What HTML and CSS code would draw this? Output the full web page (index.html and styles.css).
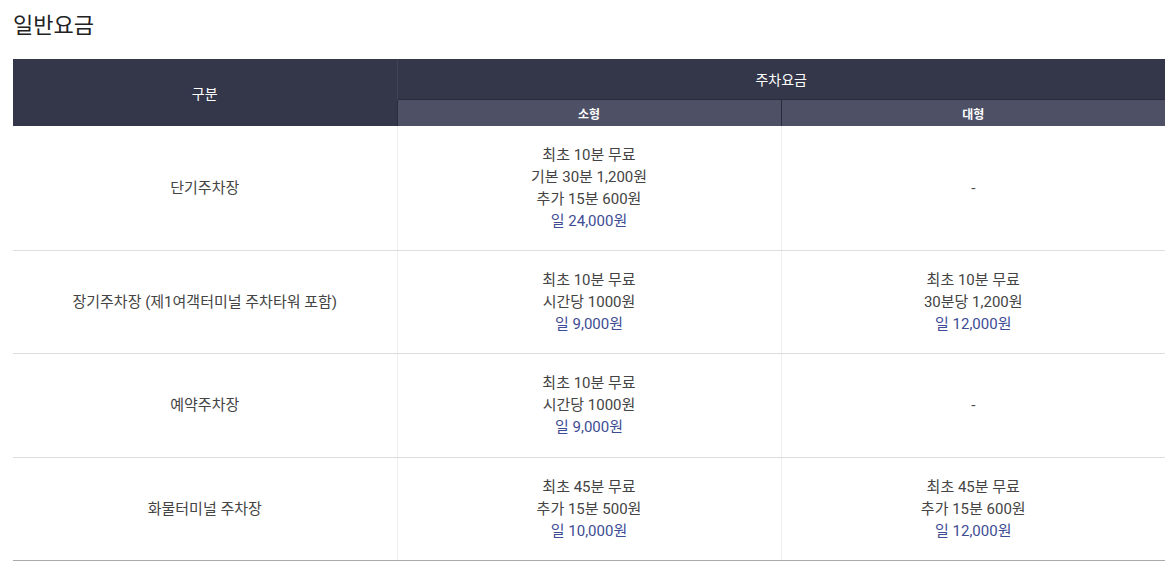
FILE: index.html
```html
<!DOCTYPE html>
<html lang="ko">
<head>
  <meta charset="UTF-8" />
  <meta name="viewport" content="width=device-width, initial-scale=1.0"/>
  <title>일반요금</title>
  <link rel="stylesheet" href="styles.css">
</head>
<body>
  <div class="container">
    <h2 class="title">일반요금</h2>

    <table class="fee-table">
      <thead>
        <tr>
          <th rowspan="2" class="head-main">구분</th>
          <th colspan="2" class="head-main">주차요금</th>
        </tr>
        <tr>
          <th class="head-sub">소형</th>
          <th class="head-sub">대형</th>
        </tr>
      </thead>
      <tbody>
        <tr>
          <td>단기주차장</td>
          <td>최초 10분 무료<br>기본 30분 1,200원<br>추가 15분 600원<br><span class="day">일 24,000원</span></td>
          <td>-</td>
        </tr>
        <tr>
          <td>장기주차장 (제1여객터미널 주차타워 포함)</td>
          <td>최초 10분 무료<br>시간당 1000원<br><span class="day">일 9,000원</span></td>
          <td>최초 10분 무료<br>30분당 1,200원<br><span class="day">일 12,000원</span></td>
        </tr>
        <tr>
          <td>예약주차장</td>
          <td>최초 10분 무료<br>시간당 1000원<br><span class="day">일 9,000원</span></td>
          <td>-</td>
        </tr>
        <tr>
          <td>화물터미널 주차장</td>
          <td>최초 45분 무료<br>추가 15분 500원<br><span class="day">일 10,000원</span></td>
          <td>최초 45분 무료<br>추가 15분 600원<br><span class="day">일 12,000원</span></td>
        </tr>
      </tbody>
    </table>
  </div>
</body>
</html>
```

FILE: styles.css
```css
body {
  margin: 0;
  background: #fff;
  color: #444;
  font-family: Roboto, "Noto Sans CJK KR", sans-serif;
}
.container {
  padding: 10px 0 0 13px;
  width: 1152px;
}
.title {
  margin: 0 0 17px;
  font-size: 22px;
  font-weight: 400;
  line-height: 32px;
  color: #222;
}
.fee-table {
  width: 100%;
  border-collapse: collapse;
  table-layout: fixed;
  text-align: center;
  font-size: 15px;
}
.fee-table th {
  color: #fff;
  font-weight: 400;
  padding: 0;
}
.head-main {
  background-color: #343649;
  height: 40px;
  font-size: 14px;
  border-left: 1px solid #3f4254;
}
.head-main:first-child {
  border-left: none;
}
.head-sub {
  background-color: #4e5166;
  height: 26px;
  font-size: 12px;
  font-weight: 700 !important;
  border-top: 1px solid #2a2c3b;
  border-left: 1px solid #2a2c3b;
}
.fee-table td {
  padding: 18px 10px;
  line-height: 22px;
  border-bottom: 1px solid #ddd;
  border-left: 1px solid #eee;
}
.fee-table td:first-child {
  border-left: none;
}
.fee-table tbody tr:nth-child(3) td {
  padding-bottom: 19px;
}
.fee-table tbody tr:last-child td {
  border-bottom: 1px solid #aaa;
}
.day {
  color: #3d4c94;
}
```
